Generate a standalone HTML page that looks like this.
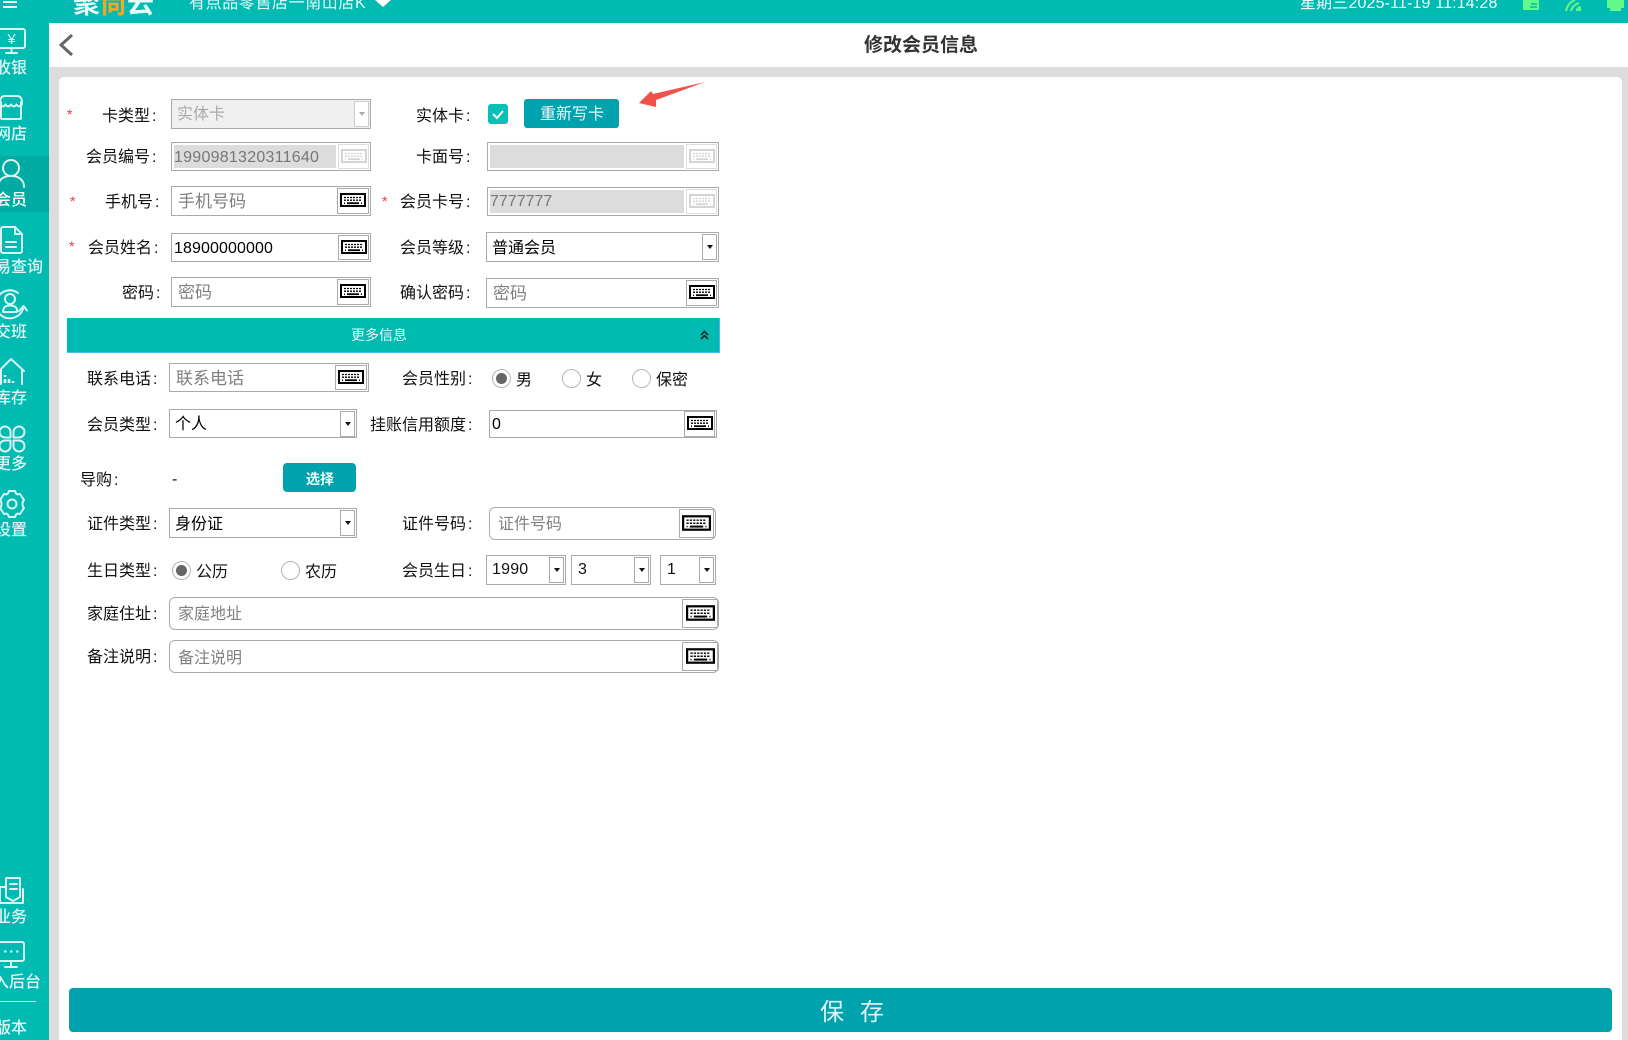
<!DOCTYPE html>
<html lang="zh-CN"><head><meta charset="utf-8"><title>修改会员信息</title>
<style>
*{box-sizing:border-box}
html,body{margin:0;padding:0}
body{width:1628px;height:1040px;position:relative;overflow:hidden;background:#dcdcdc;font-family:"Liberation Sans","Noto Sans CJK SC",sans-serif;color:#111}
.a{position:absolute}
.t{position:absolute;white-space:nowrap;font-size:16px;line-height:20px;margin-top:2px}
.l i{font-style:normal;margin-left:2px}
.p{color:#808080}
.p17{font-size:17px}
.s{position:absolute;white-space:nowrap;font-size:16px;line-height:20px;color:#dff6f4;font-weight:500;margin-top:2px}
.b{position:absolute;border:1px solid #aaa;background:#fff}
.k{position:absolute;border:1px solid #aaa;background:#fff;display:flex;align-items:center;justify-content:center;color:#000}
.k.d{border-color:#ddd;color:#d4d4d4}
.k svg{display:block;margin-top:-2px}
.ar{position:absolute;border:1px solid #aaa;background:#fff}
.ar:after{content:"";position:absolute;left:50%;top:50%;margin:-2px 0 0 -3px;border:3px solid transparent;border-top:4px solid #111;border-bottom:0}
.ar.off{border-color:#ccc}
.ar.off:after{border-top-color:#aaa}
.g{position:absolute;background:#dcdcdc}
.star{position:absolute;color:#f33;font-size:14px;line-height:14px}
.rd{position:absolute;width:19px;height:19px;border-radius:50%;border:1px solid #b5b5b5;background:#fff}
.rd.on:after{content:"";position:absolute;left:3px;top:3px;width:11px;height:11px;border-radius:50%;background:#666}
.ic{position:absolute;fill:none;stroke:#d8f5f3;stroke-width:2;stroke-linecap:round;stroke-linejoin:round}
.tb{position:absolute;fill:#60f98a}
</style></head><body>
<svg width="0" height="0" style="position:absolute"><defs><symbol id="kb" viewBox="0 0 26 14"><rect x="1" y="1" width="24" height="12" fill="#fff" stroke="currentColor" stroke-width="2"/><path d="M4 4.500H22M4 7.200H22" stroke="currentColor" stroke-width="1.300" stroke-dasharray="2 1" fill="none"/><path d="M7 10.200H19" stroke="currentColor" stroke-width="1.800" fill="none"/><path d="M4 10.200H5M21 10.200H22" stroke="currentColor" stroke-width="1.500" fill="none"/></symbol></defs></svg>

<!-- top bar -->
<div class="a" style="left:0;top:0;width:1628px;height:23px;background:#01bbb3;overflow:hidden">
 <div class="a" style="left:3px;top:1px;width:14px;height:2px;background:#e6fbf9"></div>
 <div class="a" style="left:3px;top:6px;width:14px;height:2px;background:#e6fbf9"></div>
 <div class="t" style="left:73px;top:-13px;font-size:27px;line-height:30px;font-weight:700;color:#e9fbf9;letter-spacing:0">聚<span style="color:#f5a623">尚</span>云</div>
 <div class="t" style="left:189px;top:-8px;color:#e9fbf9;letter-spacing:.6px">有点品零售店一南山店K</div>
 <svg class="a" style="left:375px;top:0" width="16" height="8"><path d="M0 0H16L8 7Z" fill="#fff"/></svg>
 <div class="t" style="left:1300px;top:-8px;color:#f0fdfc;font-size:16px;letter-spacing:.15px">星期三2025-11-19 11:14:28</div>
 <svg class="tb" style="left:1523px;top:0" width="17" height="11"><path d="M0 0H16V9a1 1 0 0 1-1 1H1a1 1 0 0 1-1-1Z"/><path d="M8 4H14M7 7H14" stroke="#01bbb3" stroke-width="1.400"/></svg>
 <svg class="a" style="left:1565px;top:0" width="16" height="12" fill="none" stroke="#60f98a" stroke-width="2"><path d="M1 11C2 6 5 2 10 0"/><path d="M6 11C7 7 9 5 14 3"/><path d="M11 11H16V6C13 6 11 8 11 11Z" fill="#60f98a" stroke="none"/></svg>
 <svg class="tb" style="left:1607px;top:0" width="17" height="12"><path d="M0 0H17V8H14V11H3V8H0Z"/></svg>
</div>

<!-- sidebar -->
<div class="a" style="left:0;top:23px;width:49px;height:1017px;background:#01bbb3"></div>
<div class="a" style="left:0;top:156px;width:49px;height:56px;background:#00aba3"></div>

<svg class="ic" style="left:-3px;top:28px" width="30" height="27"><rect x="1" y="1" width="27" height="19" rx="2"/><path d="M9 25H20M14.500 20V25"/><text x="14.500" y="16" fill="#d8f5f3" stroke="none" font-size="15" text-anchor="middle" font-family="Liberation Sans">¥</text></svg>
<div class="s" style="left:-5px;top:57px">收银</div>
<svg class="ic" style="left:-2px;top:94px" width="30" height="28"><path d="M2 8C2 4 4 2 7 2H19C22 2 24 4 24 8V10C22 13 20 13 18.500 10.500C17 13 15 13 13 10.500C11 13 9 13 7.500 10.500C6 13 4 13 2 10Z"/><path d="M3 8V24a1 1 0 0 0 1 1H22a1 1 0 0 0 1-1V8"/></svg>
<div class="s" style="left:-5px;top:123px">网店</div>
<svg class="ic" style="left:-3px;top:158px" width="30" height="30"><circle cx="14" cy="10" r="8"/><path d="M1 29C1 22 6 18 14 18C22 18 27 22 27 29"/></svg>
<div class="s" style="left:-5px;top:189px;color:#fff">会员</div>
<svg class="ic" style="left:0;top:226px" width="24" height="30"><path d="M3 1H15L22 8V25a2 2 0 0 1-2 2H3a2 2 0 0 1-2-2V3a2 2 0 0 1 2-2Z"/><path d="M15 1V8H22M6 16H16M6 21H16"/></svg>
<div class="s" style="left:-21px;top:256px">交易查询</div>
<svg class="ic" style="left:-4px;top:289px" width="36" height="32"><path d="M22 4A14 14 0 1 0 27 20"/><path d="M23 22L27.500 17L31 21.500"/><circle cx="14" cy="10" r="5"/><path d="M7 23C7 18 10 16.500 14 16.500C18 16.500 21 18 21 21.500V23Z"/></svg>
<div class="s" style="left:-5px;top:321px">交班</div>
<svg class="ic" style="left:-2px;top:357px" width="30" height="30"><path d="M1 14L13 2L26 14M24 12V27M3 12V27"/><path d="M7 18V20M7 22V26M11 22V26M15 24V26" stroke-width="2.600" stroke-linecap="butt"/></svg>
<div class="s" style="left:-5px;top:387px">库存</div>
<svg class="ic" style="left:-1px;top:424px" width="28" height="30"><path d="M11.500 13.500H6a5.500 5.500 0 1 1 5.500-5.500ZM14.500 13.500V8a5.500 5.500 0 1 1 5.500 5.500ZM11.500 16.500V22a5.500 5.500 0 1 1-5.500-5.500ZM14.500 16.500H20a5.500 5.500 0 1 1-5.500 5.500Z"/></svg>
<div class="s" style="left:-5px;top:453px">更多</div>
<svg class="ic" style="left:-2px;top:489px" width="30" height="30"><path d="M11 2H17C18 5 19 6 22 5L26 11C24 13 24 17 26 19L22 25C19 24 18 25 17 28H11C10 25 9 24 6 25L2 19C4 17 4 13 2 11L6 5C9 6 10 5 11 2Z"/><circle cx="14" cy="15" r="4.500"/></svg>
<div class="s" style="left:-5px;top:519px">设置</div>
<svg class="ic" style="left:-2px;top:875px" width="28" height="30"><path d="M8 3H22V22L15 26L8 22Z"/><path d="M12 9H19M12 14H19M8 12H2V28H25V14"/></svg>
<div class="s" style="left:-5px;top:906px">业务</div>
<svg class="ic" style="left:-3px;top:940px" width="30" height="30"><rect x="1" y="2" width="26" height="19" rx="2"/><path d="M8 27H20M14 21V27"/><path d="M8 11.500H8.500M14 11.500H14.500M20 11.500H20.500" stroke-width="2.200"/></svg>
<div class="s" style="left:-23px;top:971px">进入后台</div>
<div class="a" style="left:0;top:1001px;width:36px;height:1px;background:#c8efec"></div>
<div class="s" style="left:-5px;top:1017px">版本</div>

<!-- header -->
<div class="a" style="left:49px;top:23px;width:1579px;height:44px;background:#fff"></div>
<svg class="a" style="left:58px;top:33px" width="16" height="24" fill="none" stroke="#666" stroke-width="3"><path d="M14 2L3 12L14 22"/></svg>
<div class="t" style="left:864px;top:32px;font-size:19px;line-height:24px;font-weight:700;color:#333">修改会员信息</div>

<!-- card -->
<div class="a" style="left:59px;top:77px;width:1563px;height:963px;background:#fff;border-radius:5px 5px 0 0"></div>

<!-- row 1 -->
<div class="star" style="left:67px;top:107px">*</div>
<div class="t l" style="left:102px;top:105px">卡类型<i>:</i></div>
<div class="b" style="left:171px;top:99px;width:200px;height:30px;background:#f0f0f0"></div>
<div class="t" style="left:177px;top:103px;color:#aaa">实体卡</div>
<div class="ar off" style="left:354px;top:101px;width:15px;height:26px"></div>
<div class="t l" style="left:416px;top:105px">实体卡<i>:</i></div>
<div class="a" style="left:488px;top:104px;width:20px;height:20px;border-radius:3px;background:#0abfb5"></div>
<svg class="a" style="left:488px;top:104px" width="20" height="20" fill="none" stroke="#fff" stroke-width="2"><path d="M5 10L9 14L15 7"/></svg>
<div class="a" style="left:524px;top:99px;width:95px;height:29px;background:#00a2ae;border-radius:3px"></div>
<div class="t" style="left:540px;top:103px;color:#e9fbfb">重新写卡</div>
<svg class="a" style="left:630px;top:75px" width="80" height="40"><path d="M9 28L21 16L23 19L75 7L26 25L26 32Z" fill="#f0524a"/></svg>

<!-- row 2 -->
<div class="t l" style="left:86px;top:146px">会员编号<i>:</i></div>
<div class="b" style="left:171px;top:142px;width:200px;height:29px"></div>
<div class="g" style="left:174px;top:145px;width:162px;height:23px"></div>
<div class="t" style="left:174px;top:146px;color:#777;letter-spacing:.25px">1990981320311640</div>
<div class="k d" style="left:338px;top:144px;width:31px;height:25px"><svg width="26" height="14"><use href="#kb"/></svg></div>
<div class="t l" style="left:416px;top:146px">卡面号<i>:</i></div>
<div class="b" style="left:487px;top:142px;width:232px;height:29px"></div>
<div class="g" style="left:490px;top:145px;width:194px;height:23px"></div>
<div class="k d" style="left:686px;top:144px;width:31px;height:25px"><svg width="26" height="14"><use href="#kb"/></svg></div>

<!-- row 3 -->
<div class="star" style="left:70px;top:194px">*</div>
<div class="t l" style="left:105px;top:191px">手机号<i>:</i></div>
<div class="b" style="left:171px;top:186px;width:200px;height:30px"></div>
<div class="t p p17" style="left:178px;top:190px">手机号码</div>
<div class="k" style="left:337px;top:188px;width:32px;height:26px"><svg width="26" height="14"><use href="#kb"/></svg></div>
<div class="star" style="left:382px;top:194px">*</div>
<div class="t l" style="left:400px;top:191px">会员卡号<i>:</i></div>
<div class="b" style="left:487px;top:187px;width:232px;height:29px"></div>
<div class="g" style="left:490px;top:190px;width:194px;height:23px"></div>
<div class="t" style="left:490px;top:190px;color:#777">7777777</div>
<div class="k d" style="left:686px;top:189px;width:31px;height:25px"><svg width="26" height="14"><use href="#kb"/></svg></div>

<!-- row 4 -->
<div class="star" style="left:69px;top:239px">*</div>
<div class="t l" style="left:88px;top:237px">会员姓名<i>:</i></div>
<div class="b" style="left:171px;top:233px;width:200px;height:29px"></div>
<div class="t" style="left:174px;top:237px;color:#000;letter-spacing:.1px">18900000000</div>
<div class="k" style="left:338px;top:235px;width:31px;height:25px"><svg width="26" height="14"><use href="#kb"/></svg></div>
<div class="t l" style="left:400px;top:237px">会员等级<i>:</i></div>
<div class="b" style="left:486px;top:232px;width:233px;height:30px"></div>
<div class="t" style="left:492px;top:237px;color:#000">普通会员</div>
<div class="ar" style="left:702px;top:234px;width:15px;height:26px"></div>

<!-- row 5 -->
<div class="t l" style="left:122px;top:282px">密码<i>:</i></div>
<div class="b" style="left:171px;top:277px;width:200px;height:30px"></div>
<div class="t p p17" style="left:178px;top:281px">密码</div>
<div class="k" style="left:337px;top:279px;width:32px;height:26px"><svg width="26" height="14"><use href="#kb"/></svg></div>
<div class="t l" style="left:400px;top:282px">确认密码<i>:</i></div>
<div class="b" style="left:486px;top:278px;width:233px;height:30px"></div>
<div class="t p p17" style="left:493px;top:282px">密码</div>
<div class="k" style="left:686px;top:280px;width:31px;height:26px"><svg width="26" height="14"><use href="#kb"/></svg></div>

<!-- more info -->
<div class="a" style="left:67px;top:318px;width:653px;height:35px;background:#01bbb3;border-bottom:1px solid #4db8ee;border-right:1px solid #4db8ee"></div>
<div class="t" style="left:351px;top:323px;font-size:14px;color:#e9fbf9">更多信息</div>
<svg class="a" style="left:700px;top:330px" width="9" height="10" fill="none" stroke="#0b2a2a" stroke-width="1.600"><path d="M1 5L4.500 1.500L8 5M1 9L4.500 5.500L8 9"/></svg>

<div class="t l" style="left:87px;top:368px">联系电话<i>:</i></div>
<div class="b" style="left:169px;top:363px;width:200px;height:29px"></div>
<div class="t p p17" style="left:176px;top:367px">联系电话</div>
<div class="k" style="left:335px;top:365px;width:32px;height:25px"><svg width="26" height="14"><use href="#kb"/></svg></div>
<div class="t l" style="left:402px;top:368px">会员性别<i>:</i></div>
<div class="rd on" style="left:492px;top:369px"></div><div class="t" style="left:516px;top:369px">男</div>
<div class="rd" style="left:562px;top:369px"></div><div class="t" style="left:586px;top:369px">女</div>
<div class="rd" style="left:632px;top:369px"></div><div class="t" style="left:656px;top:369px">保密</div>

<div class="t l" style="left:87px;top:414px">会员类型<i>:</i></div>
<div class="b" style="left:169px;top:409px;width:188px;height:29px"></div>
<div class="t" style="left:175px;top:413px;color:#000">个人</div>
<div class="ar" style="left:340px;top:411px;width:15px;height:26px"></div>
<div class="t l" style="left:370px;top:414px">挂账信用额度<i>:</i></div>
<div class="b" style="left:489px;top:410px;width:228px;height:28px"></div>
<div class="t" style="left:492px;top:413px;color:#000">0</div>
<div class="k" style="left:684px;top:411px;width:31px;height:26px"><svg width="26" height="14"><use href="#kb"/></svg></div>

<div class="t l" style="left:80px;top:469px">导购<i>:</i></div>
<div class="t" style="left:172px;top:468px">-</div>
<div class="a" style="left:283px;top:463px;width:73px;height:29px;background:#00a2ae;border-radius:4px"></div>
<div class="t" style="left:306px;top:467px;font-size:14px;font-weight:700;color:#eefbfb">选择</div>

<div class="t l" style="left:87px;top:513px">证件类型<i>:</i></div>
<div class="b" style="left:169px;top:508px;width:188px;height:30px"></div>
<div class="t" style="left:175px;top:513px;color:#000">身份证</div>
<div class="ar" style="left:340px;top:510px;width:15px;height:26px"></div>
<div class="t l" style="left:402px;top:513px">证件号码<i>:</i></div>
<div class="b" style="left:489px;top:507px;width:227px;height:33px;border-radius:6px"></div>
<div class="t p" style="left:498px;top:513px">证件号码</div>
<div class="k" style="left:679px;top:509px;width:35px;height:29px"><svg width="29" height="16"><use href="#kb"/></svg></div>

<div class="t l" style="left:87px;top:560px">生日类型<i>:</i></div>
<div class="rd on" style="left:172px;top:561px"></div><div class="t" style="left:196px;top:561px">公历</div>
<div class="rd" style="left:281px;top:561px"></div><div class="t" style="left:305px;top:561px">农历</div>
<div class="t l" style="left:402px;top:560px">会员生日<i>:</i></div>
<div class="b" style="left:486px;top:555px;width:80px;height:30px"></div>
<div class="t" style="left:492px;top:558px;color:#111;letter-spacing:.2px">1990</div>
<div class="ar" style="left:549px;top:557px;width:15px;height:26px"></div>
<div class="b" style="left:571px;top:555px;width:80px;height:30px"></div>
<div class="t" style="left:578px;top:558px;color:#111">3</div>
<div class="ar" style="left:634px;top:557px;width:15px;height:26px"></div>
<div class="b" style="left:660px;top:555px;width:56px;height:30px"></div>
<div class="t" style="left:667px;top:558px;color:#111">1</div>
<div class="ar" style="left:699px;top:557px;width:15px;height:26px"></div>

<div class="t l" style="left:87px;top:603px">家庭住址<i>:</i></div>
<div class="b" style="left:169px;top:597px;width:550px;height:33px;border-radius:6px"></div>
<div class="t p" style="left:178px;top:603px">家庭地址</div>
<div class="k" style="left:682px;top:599px;width:36px;height:29px"><svg width="29" height="16"><use href="#kb"/></svg></div>

<div class="t l" style="left:87px;top:646px">备注说明<i>:</i></div>
<div class="b" style="left:169px;top:640px;width:550px;height:33px;border-radius:6px"></div>
<div class="t p" style="left:178px;top:647px">备注说明</div>
<div class="k" style="left:682px;top:642px;width:36px;height:29px"><svg width="29" height="16"><use href="#kb"/></svg></div>

<!-- save -->
<div class="a" style="left:69px;top:988px;width:1543px;height:44px;background:#00a2ae;border-radius:4px"></div>
<div class="t" style="left:820px;top:996px;font-size:24px;line-height:30px;letter-spacing:16px;color:#dff6f6">保存</div>
</body></html>
